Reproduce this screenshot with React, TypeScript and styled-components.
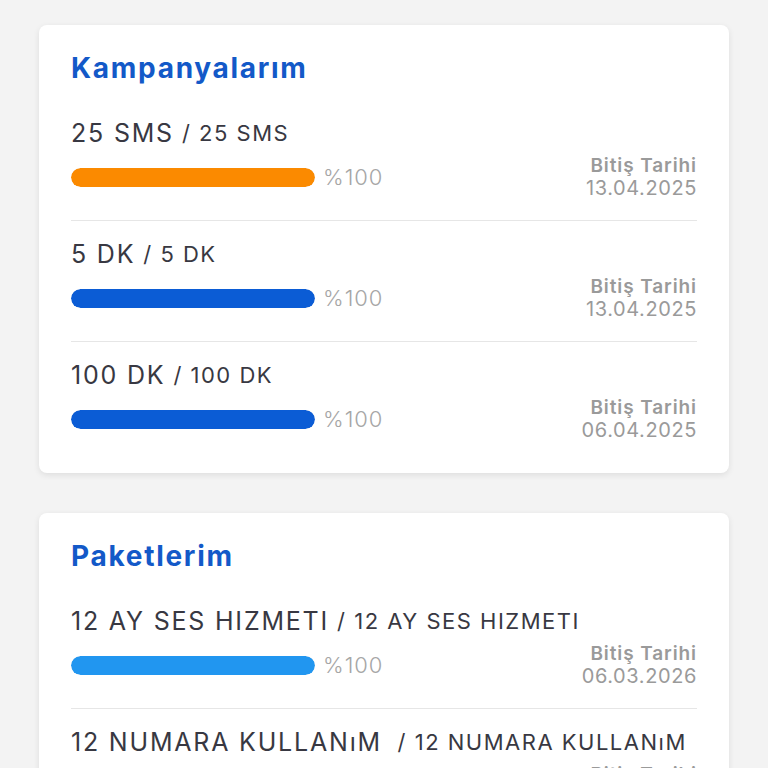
import React from 'react'
import styled, { createGlobalStyle } from 'styled-components'

type Item = {
    main: string
    sub: string
    percent: number
    color: string
    date: string
}

const campaigns: Item[] = [
    { main: "25 SMS", sub: "/ 25 SMS", percent: 100, color: "#fb8a00", date: "13.04.2025" },
    { main: "5 DK", sub: "/ 5 DK", percent: 100, color: "#0b5cd5", date: "13.04.2025" },
    { main: "100 DK", sub: "/ 100 DK", percent: 100, color: "#0b5cd5", date: "06.04.2025" },
]

const packages: Item[] = [
    { main: "12 AY SES HIZMETI", sub: "/ 12 AY SES HIZMETI", percent: 100, color: "#2196f0", date: "06.03.2026" },
    { main: "12 NUMARA KULLANıM", sub: " / 12 NUMARA KULLANıM", percent: 100, color: "#2196f0", date: "06.03.2026" },
]

const Row = ({ item }: { item: Item }) => (
    <RowBox>
        <Label>
            <Main>{item.main}</Main>
            <Sub>{item.sub}</Sub>
        </Label>
        <Line>
            <BarHolder>
                <Track>
                    <Fill $color={item.color} style={{ width: `${item.percent}%` }} />
                </Track>
                <Percent>%{item.percent}</Percent>
            </BarHolder>
            <Dates>
                <DateTitle>Bitiş Tarihi</DateTitle>
                <DateValue>{item.date}</DateValue>
            </Dates>
        </Line>
    </RowBox>
)

const App = () => {
    return (
        <>
            <GlobalStyle />
            <Page>
                <Card>
                    <Title>Kampanyalarım</Title>
                    {campaigns.map((c, i) => <Row key={i} item={c} />)}
                </Card>
                <Card>
                    <Title>Paketlerim</Title>
                    {packages.map((p, i) => <Row key={i} item={p} />)}
                </Card>
            </Page>
        </>
    )
}

export default App


const GlobalStyle = createGlobalStyle`
body {
    margin: 0;
    background-color: #f3f3f3;
    font-family: Inter, "Noto Sans", sans-serif;
}
`

const Page = styled.div`
display: flex;
flex-direction: column;
gap: 40px;
padding: 25px 39px 40px 39px;
`

const Card = styled.div`
background-color: white;
border-radius: 8px;
box-shadow: 0 2px 6px rgba(0, 0, 0, 0.09);
padding: 27px 32px 11px 32px;
`

const Title = styled.div`
font-size: 28px;
line-height: 32px;
font-weight: 700;
color: #1359c8;
letter-spacing: 1.7px;
margin-bottom: 16px;
`

const RowBox = styled.div`
padding: 20px 0 20px 0;
border-bottom: 1px solid #e6e6e6;

&:last-child {
    border-bottom: 0;
}
`

const Label = styled.div`
display: flex;
align-items: baseline;
gap: 8px;
line-height: 27px;
color: #383842;
white-space: nowrap;
`

const Main = styled.span`
font-size: 25px;
letter-spacing: 1.8px;
`

const Sub = styled.span`
font-size: 22px;
letter-spacing: 1.5px;
position: relative;
top: -1px;
white-space: pre;
`

const Line = styled.div`
display: flex;
align-items: center;
justify-content: space-between;
margin-top: 6px;
`

const BarHolder = styled.div`
display: flex;
align-items: center;
gap: 8px;
`

const Track = styled.div`
width: 244px;
height: 19px;
border-radius: 10px;
background-color: #eeeeee;
overflow: hidden;
`

const Fill = styled.div<{ $color: string }>`
height: 100%;
border-radius: 10px;
background-color: ${p => p.$color};
`

const Percent = styled.div`
font-size: 22px;
font-weight: 300;
color: #a6a6a6;
letter-spacing: 1px;
`

const Dates = styled.div`
display: flex;
flex-direction: column;
align-items: flex-end;
line-height: 23px;
color: #9a9a9a;
`

const DateTitle = styled.div`
font-size: 19px;
font-weight: 600;
letter-spacing: 0.9px;
`

const DateValue = styled.div`
font-size: 20px;
letter-spacing: 0.6px;
`
